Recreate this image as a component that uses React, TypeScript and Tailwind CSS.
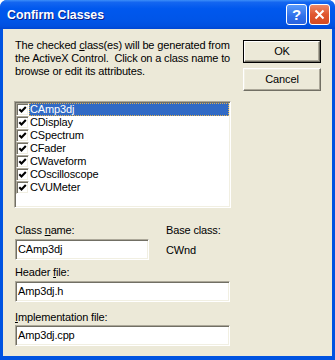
import React from "react";

const sunken =
  "border border-t-[#ACA899] border-l-[#ACA899] border-b-white border-r-white shadow-[inset_1px_1px_0_#716F64,inset_-1px_-1px_0_#F1EFE2]";

function Check() {
  return (
    <span className={`relative block w-[13px] h-[13px] shrink-0 bg-white ${sunken}`}>
      <svg width="13" height="13" viewBox="0 0 13 13" className="absolute left-[-1px] top-[-1px]">
        <path d="M3.3 6.2 L5.5 8.4 L9.8 4.1" stroke="#000" strokeWidth="2.1" fill="none" strokeLinecap="butt" />
      </svg>
    </span>
  );
}

const items = ["CAmp3dj", "CDisplay", "CSpectrum", "CFader", "CWaveform", "COscilloscope", "CVUMeter"];

export default function App() {
  return (
    <div className="w-[335px] h-[360px] flex flex-col bg-[#0053E1] rounded-t-[7px] overflow-hidden font-['Liberation_Sans',Arial,sans-serif] text-[11px] tracking-[-0.15px] text-black">
      {/* Title bar */}
      <div className="h-[29px] shrink-0 flex items-center pl-[7px] pr-[5px] bg-[linear-gradient(to_bottom,#3C8EF8_0%,#1466F0_8%,#0058EE_30%,#0055E8_70%,#0050E0_90%,#0046D2_100%)]">
        <span className="text-white font-bold text-[12.3px] tracking-normal pt-[2px] [text-shadow:1px_1px_0_#0A1F8A]">
          Confirm Classes
        </span>
        <div className="ml-auto flex gap-[2px]">
          <div className="w-[21px] h-[21px] rounded-[3px] border border-white bg-[linear-gradient(to_bottom,#5A9BFB,#2F6FEA_60%,#2A63DE)] flex items-center justify-center text-white font-bold text-[15px] tracking-normal leading-none">
            ?
          </div>
          <div className="w-[21px] h-[21px] rounded-[3px] border border-white bg-[linear-gradient(to_bottom,#EE8A6A,#E0562E_50%,#D54A22)] flex items-center justify-center">
            <svg width="11" height="11" viewBox="0 0 11 11">
              <path d="M1.5 1.5 L9.5 9.5 M9.5 1.5 L1.5 9.5" stroke="#fff" strokeWidth="2" />
            </svg>
          </div>
        </div>
      </div>

      {/* Body */}
      <div className="flex-1 ml-[3px] mr-[3px] mb-[4px] bg-[#ECE9D8] flex pl-[11px] pt-[10px] pr-[11px]">
        <div className="w-[217px] flex flex-col">
          <p className="pl-[1px] leading-[13px] whitespace-pre">
            {"The checked "}
            <span className="underline">c</span>
            {"lass(es) will be generated from\nthe ActiveX Control.  Click on a class name to\nbrowse or edit its attributes."}
          </p>

          <div className={`mt-[23px] h-[107px] bg-white ${sunken} pt-[1px] pl-[1px]`}>
            {items.map((it, i) => (
              <div key={it} className="flex h-[13px] items-stretch pr-[1px]">
                <Check />
                <div
                  className={
                    i === 0
                      ? "flex-1 bg-[#316AC5] text-white border border-dotted border-[#E0B050] leading-[11px] pl-[0px]"
                      : "flex-1 leading-[13px] pl-[1px]"
                  }
                >
                  {it}
                </div>
              </div>
            ))}
          </div>

          <div className="pl-[1px] mt-[16px] flex">
            <div className="w-[134px] flex flex-col">
              <div className="leading-[13px]">
                Class <span className="underline">n</span>ame:
              </div>
              <div className={`mt-[2px] h-[21px] bg-white ${sunken} pl-[2px] flex items-center`}>CAmp3dj</div>
            </div>
            <div className="ml-[17px] flex flex-col">
              <div className="leading-[13px]">Base class:</div>
              <div className="mt-[2px] h-[21px] flex items-center pt-[1px]">CWnd</div>
            </div>
          </div>

          <div className="pl-[1px] mt-[6px] leading-[13px]">
            Header <span className="underline">f</span>ile:
          </div>
          <div className={`ml-[1px] mt-[2px] w-[215px] h-[21px] bg-white ${sunken} pl-[2px] flex items-center`}>Amp3dj.h</div>

          <div className="pl-[1px] mt-[9px] leading-[13px]">
            <span className="underline">I</span>mplementation file:
          </div>
          <div className={`ml-[1px] mt-[1px] w-[215px] h-[21px] bg-white ${sunken} pl-[2px] flex items-center`}>Amp3dj.cpp</div>
        </div>

        <div className="ml-auto w-[78px] flex flex-col gap-[5px] pt-[1px]">
          <div className="h-[23px] border border-black flex">
            <div className="flex-1 flex items-center justify-center border border-t-white border-l-white border-r-[#716F64] border-b-[#716F64] shadow-[inset_-1px_-1px_0_#ACA899]">
              OK
            </div>
          </div>
          <div className="h-[23px] flex items-center justify-center border border-t-white border-l-white border-r-[#716F64] border-b-[#716F64] shadow-[inset_-1px_-1px_0_#ACA899,inset_1px_1px_0_#F1EFE2]">
            Cancel
          </div>
        </div>
      </div>
    </div>
  );
}
